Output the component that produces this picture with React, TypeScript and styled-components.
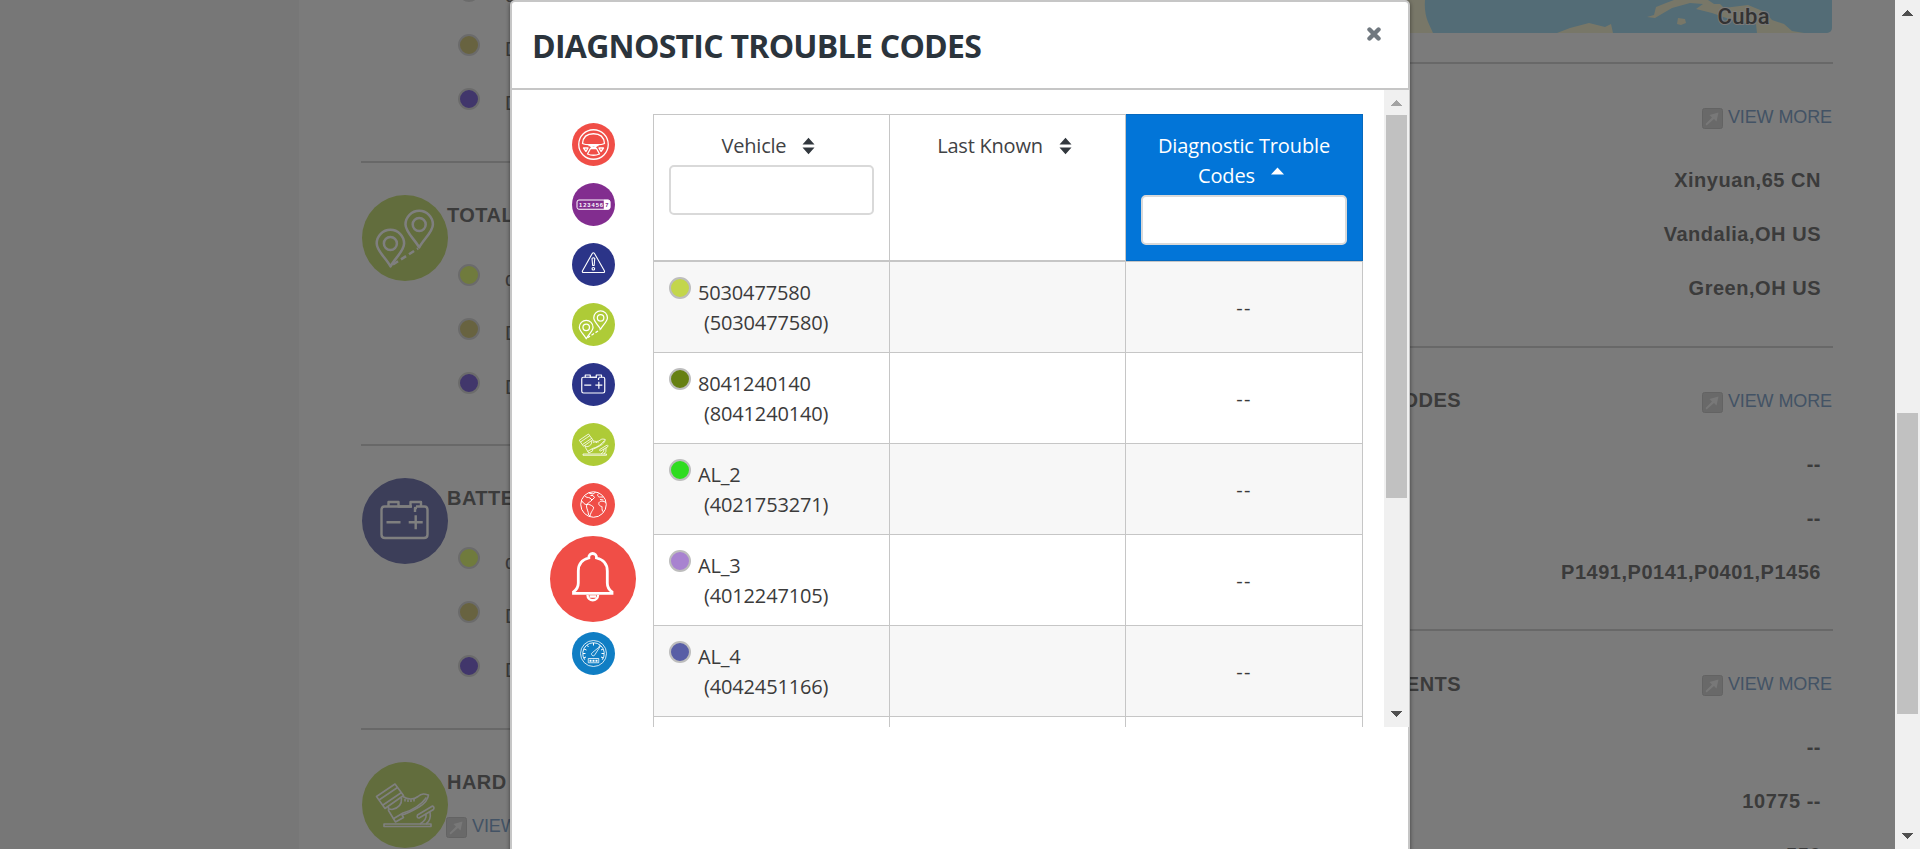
import React from "react";
import styled, { createGlobalStyle, css } from "styled-components";

const GlobalStyle = createGlobalStyle`
  *, *::before, *::after { box-sizing: border-box; }
  html, body { margin: 0; padding: 0; overflow: hidden; }
  body { font-family: "Liberation Sans", Arial, sans-serif; }
`;

const uiFont = `"Segoe UI", "Open Sans", "Noto Sans", sans-serif`;

/* ---------- page ---------- */

const Viewport = styled.div`
  position: relative;
  display: flex;
  width: 1920px;
  height: 849px;
  overflow: hidden;
  background: #efefef;
`;

const Page = styled.main`
  flex: 1;
  display: grid;
  grid-template-columns: 700px 733px;
  column-gap: 39px;
  margin-left: 299px;
  padding-left: 62px;
  height: 849px;
  overflow: hidden;
  background: #f7f7f7;
`;

const LeftColumn = styled.div`
  margin-top: -123px;
`;

const RightColumn = styled.div`
  display: flex;
  flex-direction: column;
`;

const Section = styled.section`
  flex: none;
  height: 283.5px;
  border-top: 2px solid #d0d0d0;
`;

const StatSection = styled(Section)`
  display: grid;
  grid-template-columns: 86px 1fr;
  padding-top: 32px;

  > svg { margin-left: 1px; }
`;

const StatBody = styled.div`
  padding-top: 9px;
`;

const Heading = styled.h3`
  margin: 0;
  font-size: 20px;
  line-height: 23px;
  letter-spacing: 0.45px;
  font-weight: 700;
  color: #767676;
  white-space: nowrap;
`;

const Readings = styled.ul`
  list-style: none;
  margin: 21px 0 0 11px;
  padding: 0;
`;

const Reading = styled.li`
  display: flex;
  align-items: center;
  gap: 25px;
  height: 54px;
  color: #767676;
  font-size: 20px;
  line-height: 24px;
`;

const ReadingName = styled.span`
  padding-top: 8px;
`;

const Dot = styled.span<{ $color: string; $ring?: string }>`
  flex: none;
  display: inline-block;
  width: 22px;
  height: 22px;
  border: 2px solid ${(p) => p.$ring ?? "#d6d6d6"};
  border-radius: 50%;
  background: ${(p) => p.$color};
`;

const ViewMoreLink = styled.a<{ $below?: boolean }>`
  display: inline-flex;
  align-items: center;
  gap: 5px;
  font-size: 18px;
  line-height: 21px;
  letter-spacing: -0.1px;
  color: #86a6ca;
  white-space: nowrap;
  ${(p) => p.$below && css`margin: 22px 0 0 -1px;`}
`;

const ViewMoreText = styled.span`
  padding-bottom: 2px;
`;

const MapStrip = styled.div`
  flex: none;
  height: 33px;
  margin: 0 1px 29px 0;
  border-radius: 0 0 5px 5px;
  overflow: hidden;
  background: #a6d8ec;
  svg { display: block; }
`;

const SectionHeader = styled.header`
  display: flex;
  align-items: center;
  justify-content: space-between;
  height: 89px;
  padding: 20px 1px 0 0;
`;

const RightHeading = styled(Heading)`
  width: 361px;
  padding-bottom: 3px;
  text-align: right;
`;

const Value = styled.div`
  height: 54px;
  padding-right: 12px;
  font-size: 20px;
  line-height: 54px;
  font-weight: 700;
  letter-spacing: 0.52px;
  text-align: right;
  color: #767676;
`;

const Backdrop = styled.div`
  position: absolute;
  inset: 0 25px 0 0;
  background: rgba(0, 0, 0, 0.5);
`;

/* ---------- scroll bars ---------- */

const Track = styled.div`
  flex: none;
  display: flex;
  flex-direction: column;
  align-items: center;
  width: 25px;
  height: 100%;
  background: #f0f0f0;
`;

const Arrow = styled.svg`
  display: block;
  flex: none;
  width: 25px;
  height: 25px;
`;

const ThumbLane = styled.div<{ $offset: number }>`
  flex: 1;
  width: 21px;
  padding-top: ${(p) => p.$offset}px;
`;

const Thumb = styled.div<{ $length: number }>`
  height: ${(p) => p.$length}px;
  background: #c1c1c1;
`;

function ScrollBar(p: { offset: number; length: number; upColor: string }) {
  return (
    <Track>
      <Arrow viewBox="0 0 25 25" shapeRendering="crispEdges">
        <path d="M7 16 L12.5 10 L18 16Z" fill={p.upColor} />
      </Arrow>
      <ThumbLane $offset={p.offset}>
        <Thumb $length={p.length} />
      </ThumbLane>
      <Arrow viewBox="0 0 25 25" shapeRendering="crispEdges">
        <path d="M7 9 L18 9 L12.5 15Z" fill="#505050" />
      </Arrow>
    </Track>
  );
}

/* ---------- round icons, drawn on an 86 unit disc ---------- */

type IconName =
  | "wheel" | "odometer" | "warning" | "pins" | "battery"
  | "pedal" | "globe" | "bell" | "gauge";

const glyphs: Record<IconName, React.ReactNode> = {
  wheel: (
    <g strokeWidth="2.6">
      <circle cx="43" cy="43" r="29.5" />
      <path d="M21 41 C22 28 31 21.5 43 21.5 S64 28 65 41 C60 44 52 43.5 43 43.5 S26 44 21 41Z" />
      <path d="M33 45 L53 45 M37 45 L39 49 L47 49 L49 45" />
      <path d="M37 51 L49 51 L55 62 Q43 67 31 62Z M37 51 L49 46 M49 51 L37 46" />
      <path d="M23 50 L32 50 L28 57Z M63 50 L54 50 L58 57Z" />
    </g>
  ),
  odometer: (
    <>
      <rect x="10" y="34" width="66" height="18.500" rx="4" strokeWidth="2" />
      <path d="M64 34 H72 Q76 34 76 38 V48.500 Q76 52.500 72 52.500 H64Z" fill="#fff" />
      <text x="14" y="47.300" fontSize="11.500" fontWeight="700" textLength="48" fill="#fff" stroke="none" fontFamily="Liberation Sans, sans-serif">123456</text>
      <text x="66.500" y="47.300" fontSize="11.500" fontWeight="700" fill="#822d8f" stroke="none" fontFamily="Liberation Sans, sans-serif">7</text>
    </>
  ),
  warning: (
    <g strokeWidth="2.2">
      <path d="M42.700 19.500 Q44 19.500 45 21 L65 56 Q65.500 59 63 59 H23 Q20 59 20.800 56 L40.500 21 Q41.500 19.500 42.700 19.500Z" />
      <path d="M40 31 Q42.700 28 45.500 31 L44.300 45 H41.300Z" />
      <circle cx="42.700" cy="51.500" r="2.600" />
    </g>
  ),
  pins: (
    <g strokeWidth="2.5">
      <path d="M28.500 71.500 C24 63 14.700 56 14.700 48.500 A13.700 13.700 0 0 1 42.100 48.500 C42.100 56 33 63 28.500 71.500Z" />
      <circle cx="28.400" cy="48.500" r="6.500" />
      <path d="M57.200 52.500 C52.500 44 43.500 37 43.500 29.500 A13.700 13.700 0 0 1 70.900 29.500 C70.900 37 61.700 44 57.200 52.500Z" />
      <circle cx="57.200" cy="29.500" r="6.500" />
      <path d="M31 69.500 L56 53.500" strokeDasharray="6 3.500" />
    </g>
  ),
  battery: (
    <g strokeWidth="2.4">
      <path d="M26.500 28.500 V24 H36.500 V28.500 H48.500 V24 H59 V28.500 M53 34 V30 H55" />
      <path d="M22.500 28.500 H50 M54 28.500 H62.500 Q65.500 28.500 65.500 32 V56.500 Q65.500 60 62 60 H23 Q19.500 60 19.500 56.500 V32 Q19.500 28.500 22.500 28.500" />
      <path d="M24.500 44.300 H38.500 M46.700 44.300 H60.700 M53.700 37.300 V51.300" />
    </g>
  ),
  pedal: (
    <g strokeWidth="1.600">
      <path d="M14.500 34.500 L33 22 L41.500 33.500 L23 46.500Z M17 38 L35.500 25.500 M21 43 L39.500 30.500" />
      <path d="M41 34.500 C46 38 52 37.500 56 34.500 C60 31 63 32 66.500 33 C66 38 62 42 57 45 C50 49 44 52 40 53 L41.500 55.500 L33.500 60 L26.500 48.500 L26.500 45" />
      <path d="M39.500 36 C40 42 37 46 30 47.500 L27 47 M31 57 L41 51 C50 49 60 42 64.500 35.500 M43 37 V39.500 M46 37.500 V40 M49 37.500 V40 M52 37 V39.500" />
      <path d="M55.500 53 L70.500 44 Q72.800 45 71.500 47.500 L57 56 Q54.500 56 55.500 53Z M64 52 Q65 58 58 62 M68 50 Q69.500 58 64 62" />
      <path d="M22 62 H69 V64.500 H22Z" />
    </g>
  ),
  globe: (
    <g strokeWidth="2">
      <circle cx="43" cy="43" r="25.500" />
      <path d="M25 25 C28 30 32 28 36 30 L40 34 C37 38 33 38 30 43 C24 44 22 38 19 35 M30 43 C34 42 38 44 43 48 C44 53 38 56 36 66 L33 64 C33 56 29 52 29 46Z" />
      <path d="M33 20 L42 22 L47 18.500 M40 34 L45 29 L42 25 L37 25 M53 21 C49 25 53 29 57 28 L62 28 M68 39 C63 36 57 35 54 39 C52 45 58 47 60 47 C60 52 60 57 63 58 M56 33 L63 34" />
    </g>
  ),
  bell: (
    <g strokeWidth="2.800" strokeLinejoin="miter">
      <path d="M23.500 57.300 H62 V55.800 C58.500 53.500 57.300 51 57.300 47 V35 C57.300 28 53 23.500 46.500 22 C47 16 38.300 16 38.800 22 C32.500 23.500 28.300 28 28.300 35 V47 C28.300 51 27 53.500 23.500 55.800Z" />
      <path d="M37.500 59 C37.500 66 48 66 48 59 M39.500 60.500 H46" strokeWidth="2.400" />
    </g>
  ),
  gauge: (
    <g strokeWidth="1.600">
      <circle cx="43" cy="43" r="26" />
      <path d="M25.500 55.500 A21.500 21.500 0 1 1 60.500 55.500" strokeWidth="1.800" />
      <path d="M23 52 L28 50 M22 43 H27 M24 34 L29 36 M30 26.500 L33 30 M43 22 V27 M56 26.500 L54 29 M62 34 L58 36 M64 43 H59 M63 52 L58 50" strokeWidth="2" />
      <path d="M41 41 L57 28 L46 45 A3.500 3.500 0 1 1 41 41Z" />
      <rect x="32.500" y="53" width="21" height="8.500" />
      <path d="M35 57.300 H39 M41 57.300 H45 M47 57.300 H51" strokeWidth="4" />
    </g>
  ),
};

const Disc = styled.svg<{ $size: number }>`
  display: block;
  flex: none;
  width: ${(p) => p.$size}px;
  height: ${(p) => p.$size}px;
`;

function RoundIcon(p: { name: IconName; color: string; size: number }) {
  return (
    <Disc $size={p.size} viewBox="0 0 86 86" fill="none" stroke="#fff" strokeLinejoin="round">
      <circle cx="43" cy="43" r="43" fill={p.color} stroke="none" />
      {glyphs[p.name]}
    </Disc>
  );
}

function ViewMore({ below }: { below?: boolean }) {
  return (
    <ViewMoreLink $below={below}>
      <svg width="21" height="21" viewBox="0 0 21 21">
        <rect x="0.500" y="0.500" width="20" height="20" rx="2" fill="#d2d2d2" stroke="#c6c6c6" />
        <path d="M4.500 17.500 L3.500 16 L10 9.500 L7.500 7 L16.500 4.500 L14.500 13.500 L12 11Z" fill="#f0f0f0" />
      </svg>
      <ViewMoreText>VIEW MORE</ViewMoreText>
    </ViewMoreLink>
  );
}

/* ---------- dialog ---------- */

const Dialog = styled.div`
  position: absolute;
  left: 510px;
  top: 0;
  width: 900px;
  height: 880px;
  border: 2px solid #c6c6c6;
  border-radius: 5px;
  background: #fff;
  box-shadow: 0 1px 4px rgba(0, 0, 0, 0.5);
  font-family: ${uiFont};
`;

const DialogHeader = styled.header`
  display: flex;
  justify-content: space-between;
  align-items: flex-start;
  height: 88px;
  margin-right: -1px;
  padding: 22px 28px 0 20px;
  border-bottom: 2px solid #c6c6c6;
`;

const DialogTitle = styled.h2`
  margin: 0;
  font-size: 32px;
  line-height: 44px;
  font-weight: 700;
  letter-spacing: -0.73px;
  color: #2b343c;
  white-space: nowrap;
`;

const CloseIcon = styled.svg`
  display: block;
  width: 14px;
  height: 14px;
  margin-top: 3px;
`;

const DialogBody = styled.div`
  display: flex;
  height: 637px;
  margin-right: -1px;
  overflow: hidden;
`;

const IconRail = styled.nav`
  flex: none;
  display: flex;
  flex-direction: column;
  align-items: center;
  width: 141px;
  padding: 24px 0 0 22px;
`;

const RailItem = styled.div<{ $active?: boolean }>`
  display: flex;
  align-items: center;
  flex: none;
  height: ${(p) => (p.$active ? 89 : 60)}px;
  ${(p) => p.$active && css`margin-left: -1px;`}
`;

const TablePane = styled.div`
  flex: 1;
  padding-top: 24px;
`;

const Table = styled.div`
  display: grid;
  grid-template-columns: 236px 236px 237px;
  width: 710px;
  border: solid #c6c6c6;
  border-width: 1px 0 0 1px;
`;

const HeadCell = styled.div<{ $sorted?: boolean }>`
  height: 147px;
  padding: 16px 15px 0;
  border-right: 1px solid #c6c6c6;
  border-bottom: 2px solid #c6c6c6;
  text-align: center;
  font-size: 20px;
  line-height: 30px;
  color: #3f4245;
  ${(p) =>
    p.$sorted &&
    css`
      margin-top: -1px;
      height: 147px;
      padding-top: 17px;
      color: #fff;
      background: #0275d8;
      border-right-color: #0669be;
      border-bottom: 1px solid #0669be;
      box-shadow: inset 0 1px #0669be, 0 1px #c6c6c6;
    `}
`;

const HeadText = styled.div<{ $sorted?: boolean }>`
  white-space: nowrap;
  letter-spacing: ${(p) => (p.$sorted ? "-0.12px" : "-0.22px")};
`;

const SortIcon = styled.svg`
  width: 13px;
  height: 18px;
  margin: 0 6px 0 16px;
  vertical-align: -2px;
`;

const Filter = styled.input`
  display: block;
  width: 100%;
  height: 50px;
  margin-top: 4px;
  padding: 0 12px;
  border: 2px solid #d9d9d9;
  border-radius: 5px;
  background: #fff;
`;

const Cell = styled.div<{ $striped: boolean }>`
  display: flex;
  align-items: flex-start;
  gap: 7px;
  height: 91px;
  padding: 15px;
  border-right: 1px solid #c6c6c6;
  border-bottom: 1px solid #c6c6c6;
  background: ${(p) => (p.$striped ? "#f7f7f7" : "#fff")};
  color: #3b3b3b;
  font-size: 20px;
  line-height: 30px;
`;

const CodeCell = styled(Cell)`
  align-items: center;
  justify-content: center;
  padding-top: 17px;
  letter-spacing: 1.2px;
`;

const VehicleName = styled.div`
  padding-top: 1px;
  letter-spacing: -0.16px;
  white-space: nowrap;
`;

const Serial = styled.div`
  padding-left: 6px;
`;

const rail: { name: IconName; color: string; active?: boolean }[] = [
  { name: "wheel", color: "#f04e47" },
  { name: "odometer", color: "#822d8f" },
  { name: "warning", color: "#2b3488" },
  { name: "pins", color: "#aecb37" },
  { name: "battery", color: "#2b3488" },
  { name: "pedal", color: "#aecb37" },
  { name: "globe", color: "#f04e47" },
  { name: "bell", color: "#f04e47", active: true },
  { name: "gauge", color: "#107ec4" },
];

const vehicles = [
  { name: "5030477580", serial: "5030477580", color: "#c3d64b" },
  { name: "8041240140", serial: "8041240140", color: "#668013" },
  { name: "AL_2", serial: "4021753271", color: "#2fdc20" },
  { name: "AL_3", serial: "4012247105", color: "#a883d0" },
  { name: "AL_4", serial: "4042451166", color: "#585ea6" },
];

const readings = [
  { name: "d", color: "#e0f67a" },
  { name: "D", color: "#d0c680" },
  { name: "D", color: "#826cd6" },
];

const ReadingList = () => (
  <Readings>
    {readings.map((r, i) => (
      <Reading key={i}>
        <Dot $color={r.color} />
        <ReadingName>{r.name}</ReadingName>
      </Reading>
    ))}
  </Readings>
);

const stats: { title: string; icon: IconName; color: string; link?: boolean }[] = [
  { title: "", icon: "odometer", color: "#b47cc0" },
  { title: "TOTAL", icon: "pins", color: "#c4da7a" },
  { title: "BATTERY", icon: "battery", color: "#787cb2" },
  { title: "HARD", icon: "pedal", color: "#c4da7a", link: true },
];

const reports = [
  { title: "", values: ["Xinyuan,65 CN", "Vandalia,OH US", "Green,OH US"] },
  { title: "CODES", values: ["--", "--", "P1491,P0141,P0401,P1456"] },
  { title: "EVENTS", values: ["--", "10775 --", "556"] },
];

const TitleSpace = styled.div`
  height: 23px;
`;

const SortBoth = () => (
  <SortIcon viewBox="0 0 13 18">
    <path d="M0.500 7.500 L6.500 0.800 L12.500 7.500Z M0.500 10.500 H12.500 L6.500 17.200Z" fill="#32383e" />
  </SortIcon>
);

const SortUp = () => (
  <SortIcon viewBox="0 0 13 18">
    <path d="M0 7.500 L6.500 0.500 L13 7.500Z" fill="#fff" />
  </SortIcon>
);

export default function App() {
  return (
    <>
      <GlobalStyle />
      <Viewport>
        <Page>
          <LeftColumn>
            {stats.map((s) => (
              <StatSection key={s.icon}>
                <RoundIcon name={s.icon} color={s.color} size={86} />
                <StatBody>
                  {s.title ? <Heading>{s.title}</Heading> : <TitleSpace />}
                  {s.link ? <ViewMore below /> : <ReadingList />}
                </StatBody>
              </StatSection>
            ))}
          </LeftColumn>
          <RightColumn>
            <MapStrip>
              <svg width="732" height="33" viewBox="1100 0 732 33">
                <g fill="#f0efd0">
                  <path d="M1100 0 H1425 Q1424 12 1428 22 L1433 33 H1100Z" />
                  <path d="M1557 33 L1570 28 L1589 23 L1605 27 L1611 24 L1613 33Z" />
                  <path d="M1647 17 L1654 15 L1656 7 L1666 3 L1674 0 H1708 L1714 4 L1720 4 L1724 8 L1748 5 L1765 12 L1772 20 L1784 24 L1792 31 L1804 33 H1757 L1756 24 L1738 22 L1712 13 L1696 9 L1703 4 L1690 3 L1672 8 L1660 15 L1655 18Z" />
                  <path d="M1678 18 L1685 19 L1686 23 L1681 25 L1677 24Z" />
                </g>
                <text x="1717.500" y="23.500" fontFamily="Roboto, sans-serif" fontSize="22" fontWeight="500" fill="#666" stroke="#f4f4f4" strokeWidth="2" paintOrder="stroke" textLength="52">Cuba</text>
              </svg>
            </MapStrip>
            {reports.map((r, i) => (
              <Section key={i}>
                <SectionHeader>
                  <RightHeading>{r.title}</RightHeading>
                  <ViewMore />
                </SectionHeader>
                {r.values.map((v, j) => (
                  <Value key={j}>{v}</Value>
                ))}
              </Section>
            ))}
          </RightColumn>
        </Page>
        <ScrollBar offset={388} length={301} upColor="#505050" />
        <Backdrop />
        <Dialog role="dialog">
          <DialogHeader>
            <DialogTitle>DIAGNOSTIC TROUBLE CODES</DialogTitle>
            <CloseIcon viewBox="0 0 14 14">
              <path d="M2.500 2.500 L11.500 11.500 M11.500 2.500 L2.500 11.500" stroke="#70787f" strokeWidth="4.400" strokeLinecap="round" />
            </CloseIcon>
          </DialogHeader>
          <DialogBody>
            <IconRail>
              {rail.map((r) => (
                <RailItem key={r.name} $active={r.active}>
                  <RoundIcon name={r.name} color={r.color} size={r.active ? 86 : 43} />
                </RailItem>
              ))}
            </IconRail>
            <TablePane>
              <Table>
                <HeadCell>
                  <HeadText>Vehicle<SortBoth /></HeadText>
                  <Filter />
                </HeadCell>
                <HeadCell>
                  <HeadText>Last Known<SortBoth /></HeadText>
                </HeadCell>
                <HeadCell $sorted>
                  <HeadText $sorted>Diagnostic Trouble</HeadText>
                  <HeadText $sorted>Codes<SortUp /></HeadText>
                  <Filter />
                </HeadCell>
                {vehicles.map((v, i) => (
                  <React.Fragment key={v.name}>
                    <Cell $striped={i % 2 === 0}>
                      <Dot $color={v.color} $ring="#bdbdbd" />
                      <VehicleName>
                        {v.name}
                        <Serial>({v.serial})</Serial>
                      </VehicleName>
                    </Cell>
                    <Cell $striped={i % 2 === 0} />
                    <CodeCell $striped={i % 2 === 0}>--</CodeCell>
                  </React.Fragment>
                ))}
                <Cell $striped={false} />
                <Cell $striped={false} />
                <Cell $striped={false} />
              </Table>
            </TablePane>
            <ScrollBar offset={0} length={383} upColor="#a3a3a3" />
          </DialogBody>
        </Dialog>
      </Viewport>
    </>
  );
}
